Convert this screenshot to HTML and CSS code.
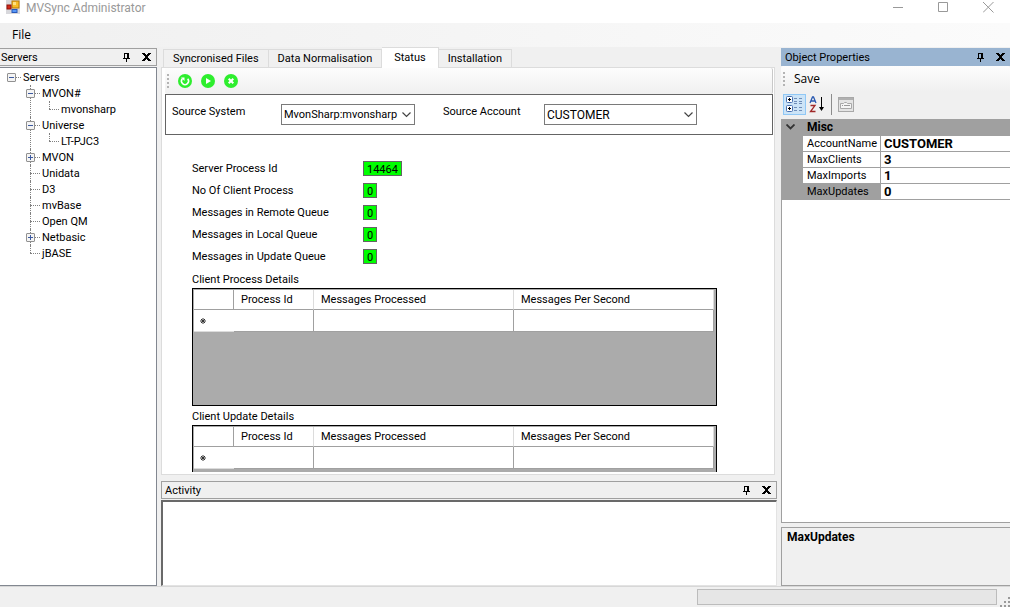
FILE: index.html
```html
<!DOCTYPE html>
<html lang="en">
<head>
    <meta charset="UTF-8">
    <meta name="viewport" content="width=device-width, initial-scale=1.0">
    <title>MVSync Administrator</title>
    <link rel="stylesheet" href="styles.css">
</head>
<body>
    <!-- shared icons -->
    <svg class="defs" width="0" height="0">
        <symbol id="pin" viewBox="0 0 7 9">
            <path d="M1 0h5v5h1v1H4v3H3V6H0V5h1zM2 1v4h2V1z" fill="#000" fill-rule="evenodd"/>
        </symbol>
        <symbol id="close" viewBox="0 0 9 8">
            <path d="M0 0h3v1h1v1h1V1h1V0h3v1H8v1H7v1H6v2h1v1h1v1h1v1H6V7H5V6H4v1H3v1H0V7h1V6h1V5h1V3H2V2H1V1H0z" fill="#000"/>
        </symbol>
        <symbol id="chevron" viewBox="0 0 9 6">
            <path d="M.5 .5l4 4 4-4" fill="none" stroke="#444" stroke-width="1.2"/>
        </symbol>
    </svg>

    <header class="titlebar">
        <svg class="app-icon" width="14" height="14" viewBox="0 0 14 14">
            <rect x="0" y="0" width="14" height="14" fill="#d8d8dc"/>
            <rect x="6" y="1" width="7" height="7" fill="#f8bc28" stroke="#b87808"/>
            <rect x="7" y="2" width="3" height="3" fill="#ffe080"/>
            <rect x="1" y="5" width="4" height="4" fill="#d02818" stroke="#901008"/>
            <rect x="6" y="9.500" width="5" height="3" fill="#5898f8" stroke="#2858b8"/>
        </svg>
        <h1>MVSync Administrator</h1>
        <button class="win-btn" aria-label="Minimize"><svg width="11" height="11"><path d="M0 5.500h10" stroke="#999"/></svg></button>
        <button class="win-btn" aria-label="Maximize"><svg width="11" height="11"><path d="M.5 .5h9v9h-9z" fill="none" stroke="#999"/></svg></button>
        <button class="win-btn" aria-label="Close"><svg width="11" height="11"><path d="M0 0l10.500 10.500M10.500 0L0 10.500" stroke="#999"/></svg></button>
    </header>

    <nav class="menubar"><button>File</button></nav>

    <main class="dock">
        <aside class="servers">
            <div class="pane-title">
                <h2>Servers</h2>
                <button aria-label="Pin"><svg width="7" height="9"><use href="#pin"/></svg></button>
                <button aria-label="Close"><svg width="9" height="8"><use href="#close"/></svg></button>
            </div>
            <ul class="tree">
                <li>
                    <div class="node"><button class="toggle open" aria-label="Collapse"></button>Servers</div>
                    <ul>
                        <li>
                            <div class="node"><button class="toggle open" aria-label="Collapse"></button>MVON#</div>
                            <ul><li><div class="node">mvonsharp</div></li></ul>
                        </li>
                        <li>
                            <div class="node"><button class="toggle open" aria-label="Collapse"></button>Universe</div>
                            <ul><li><div class="node">LT-PJC3</div></li></ul>
                        </li>
                        <li><div class="node"><button class="toggle" aria-label="Expand"></button>MVON</div></li>
                        <li><div class="node">Unidata</div></li>
                        <li><div class="node">D3</div></li>
                        <li><div class="node">mvBase</div></li>
                        <li><div class="node">Open QM</div></li>
                        <li><div class="node"><button class="toggle" aria-label="Expand"></button>Netbasic</div></li>
                        <li><div class="node">jBASE</div></li>
                    </ul>
                </li>
            </ul>
        </aside>

        <section class="center">
            <div class="tabs">
                <button>Syncronised Files</button>
                <button>Data Normalisation</button>
                <button class="active">Status</button>
                <button>Installation</button>
            </div>
            <div class="page">
                <div class="page-body">
                    <div class="toolbar">
                        <span class="grip"></span>
                        <button aria-label="Refresh"><svg width="14" height="14" viewBox="0 0 14 14"><circle cx="7" cy="7" r="7" fill="#2eee2e"/><path d="M4.300 4.800a3.500 3.500 0 1 0 5.400 0" fill="none" stroke="#fff" stroke-width="1.500"/><path d="M3 3.500h3.500V7z" fill="#fff"/></svg></button>
                        <button aria-label="Start"><svg width="14" height="14" viewBox="0 0 14 14"><circle cx="7" cy="7" r="7" fill="#2eee2e"/><path d="M5 4l5 3-5 3z" fill="#fff"/></svg></button>
                        <button aria-label="Stop"><svg width="14" height="14" viewBox="0 0 14 14"><circle cx="7" cy="7" r="7" fill="#2eee2e"/><path d="M4.700 4.700l4.600 4.600M9.300 4.700L4.700 9.300" stroke="#fff" stroke-width="2"/></svg></button>
                    </div>
                    <div class="source">
                        <label for="system">Source System</label>
                        <div class="combo system">
                            <select id="system"><option>MvonSharp:mvonsharp</option></select>
                            <svg width="9" height="6"><use href="#chevron"/></svg>
                        </div>
                        <label for="account">Source Account</label>
                        <div class="combo account">
                            <select id="account"><option>CUSTOMER</option></select>
                            <svg width="9" height="6"><use href="#chevron"/></svg>
                        </div>
                    </div>
                    <div class="content">
                        <dl class="stats">
                            <dt>Server Process Id</dt><dd><span>14464</span></dd>
                            <dt>No Of Client Process</dt><dd><span>0</span></dd>
                            <dt>Messages in Remote Queue</dt><dd><span>0</span></dd>
                            <dt>Messages in Local Queue</dt><dd><span>0</span></dd>
                            <dt>Messages in Update Queue</dt><dd><span>0</span></dd>
                        </dl>
                        <h3>Client Process Details</h3>
                        <div class="grid-view">
                            <table>
                                <tr><th class="row-head"></th><th class="id">Process Id</th><th class="processed">Messages Processed</th><th>Messages Per Second</th></tr>
                                <tr><td class="row-head"><svg width="6" height="6" viewBox="0 0 6 6"><path d="M3 0v6M0 3h6M1 1l4 4M5 1L1 5" stroke="#333"/></svg></td><td></td><td></td><td></td></tr>
                            </table>
                        </div>
                        <h3>Client Update Details</h3>
                        <div class="grid-view">
                            <table>
                                <tr><th class="row-head"></th><th class="id">Process Id</th><th class="processed">Messages Processed</th><th>Messages Per Second</th></tr>
                                <tr><td class="row-head"><svg width="6" height="6" viewBox="0 0 6 6"><path d="M3 0v6M0 3h6M1 1l4 4M5 1L1 5" stroke="#333"/></svg></td><td></td><td></td><td></td></tr>
                            </table>
                        </div>
                    </div>
                </div>
            </div>
            <div class="pane-title">
                <h2><label for="activity">Activity</label></h2>
                <button aria-label="Pin"><svg width="7" height="9"><use href="#pin"/></svg></button>
                <button aria-label="Close"><svg width="9" height="8"><use href="#close"/></svg></button>
            </div>
            <textarea id="activity" class="activity"></textarea>
        </section>

        <aside class="properties">
            <div class="pane-title focused">
                <h2>Object Properties</h2>
                <button aria-label="Pin"><svg width="7" height="9"><use href="#pin"/></svg></button>
                <button aria-label="Close"><svg width="9" height="8"><use href="#close"/></svg></button>
            </div>
            <div class="toolbar save">
                <span class="grip"></span>
                <button>Save</button>
            </div>
            <div class="sortbar">
                <button class="on" aria-label="Categorized">
                    <svg width="17" height="17" viewBox="0 0 17 17">
                        <g fill="#fff" stroke="#4870b0"><rect x=".5" y=".5" width="6" height="6" rx="1"/><rect x=".5" y="9.500" width="6" height="6" rx="1"/></g>
                        <path d="M2 3.500h3M3.500 2v3M2 12.500h3M3.500 11v3" stroke="#000"/>
                        <path d="M8 2.500h4M8 5.500h4M8 7.500h4M8 11.500h4M8 14.500h4M13 2.500h3M13 5.500h3M13 7.500h3M13 11.500h3M13 14.500h3" stroke="#6f8db8" stroke-dasharray="3 1"/>
                    </svg>
                </button>
                <button aria-label="Alphabetical">
                    <svg width="16" height="17" viewBox="0 0 16 17">
                        <path d="M1 7l2.500-6h1L7 7M2 5h4" fill="none" stroke="#2858b0" stroke-width="1.300"/>
                        <path d="M1.500 9.500H6L1.500 15.500h5" fill="none" stroke="#a02828" stroke-width="1.300"/>
                        <path d="M12.500 1v13" stroke="#000"/><path d="M10 11h5l-2.500 4z"/>
                    </svg>
                </button>
                <span class="sep"></span>
                <button aria-label="Property Pages" disabled>
                    <svg width="16" height="15" viewBox="0 0 16 15">
                        <rect x=".5" y=".5" width="15" height="14" fill="#e4e4e4" stroke="#a8a8a8"/>
                        <path d="M1 2h14" stroke="#b0b0b0" stroke-width="2"/>
                        <path d="M2.500 11.500v-5h3l1-1h2l1 1h4v5z" fill="#f4f4f4" stroke="#a8a8a8"/>
                        <path d="M4 8.500h1M6 8.500h6" stroke="#999"/>
                    </svg>
                </button>
            </div>
            <div class="prop-grid">
                <table>
                    <colgroup><col class="col-gutter"><col class="col-name"><col></colgroup>
                    <tr class="category"><th class="gutter"><svg width="9" height="6" viewBox="0 0 9 6"><path d="M.5 .5l4 4 4-4" fill="none" stroke="#333" stroke-width="1.800"/></svg></th><th colspan="2">Misc</th></tr>
                    <tr><td class="gutter"></td><th>AccountName</th><td>CUSTOMER</td></tr>
                    <tr><td class="gutter"></td><th>MaxClients</th><td>3</td></tr>
                    <tr><td class="gutter"></td><th>MaxImports</th><td>1</td></tr>
                    <tr class="selected"><td class="gutter"></td><th>MaxUpdates</th><td>0</td></tr>
                </table>
            </div>
            <div class="prop-help">MaxUpdates</div>
        </aside>
    </main>

    <footer class="statusbar">
        <progress value="0" max="100" aria-label="Progress"></progress>
        <svg width="10" height="10" viewBox="0 0 10 10"><path d="M8 0h2v2H8zM4 4h2v2H4zM8 4h2v2H8zM0 8h2v2H0zM4 8h2v2H4zM8 8h2v2H8z" fill="#999"/></svg>
    </footer>
</body>
</html>
```
FILE: styles.css
```css
* {
    box-sizing: border-box;
}

body {
    margin: 0;
    height: 100vh;
    display: flex;
    flex-direction: column;
    overflow: hidden;
    background: #f0f0f0;
    color: #000;
    font: 11px/14px Roboto, "Liberation Sans", sans-serif;
}

h1, h2, h3, ul, dl, dd {
    margin: 0;
    padding: 0;
    font-size: inherit;
    font-weight: normal;
}

ul {
    list-style: none;
}

button {
    padding: 0;
    border: 0;
    background: none;
    color: inherit;
    font: inherit;
}

svg {
    display: block;
}

table {
    border-collapse: separate;
    border-spacing: 0;
    table-layout: fixed;
}

th, td {
    padding: 0;
    text-align: left;
    font-weight: normal;
}

.defs {
    position: absolute;
}

/* title and menu */
.titlebar {
    flex: none;
    display: flex;
    height: 23px;
    padding-left: 6px;
    background: #fff;
    color: #999;
    font-size: 12px;
    line-height: 16px;
}

.titlebar h1 {
    flex: 1;
    padding-left: 6px;
}

.win-btn {
    width: 45px;
    display: flex;
    justify-content: center;
    padding: 2px 0 0 2px;
}

.menubar {
    flex: none;
    height: 24px;
    padding-left: 12px;
    background: linear-gradient(to right, #f0f0f0, #fbfbfb);
    font: 12px/24px "Open Sans", "Noto Sans", sans-serif;
}

/* docked panes */
.dock {
    flex: 1;
    min-height: 0;
    display: grid;
    grid-template-columns: 157px minmax(0, 1fr) 229px;
    grid-template-rows: minmax(0, 1fr);
    column-gap: 4px;
}

.servers, .center, .properties {
    display: flex;
    flex-direction: column;
    min-height: 0;
}

.servers, .properties {
    padding-top: 1px;
}

.pane-title {
    flex: none;
    display: flex;
    align-items: center;
    gap: 12px;
    height: 18px;
    padding: 0 5px 0 3px;
    border: 1px solid #a0a0a0;
}

.pane-title h2 {
    flex: 1;
    padding-top: 2px;
}

.servers .pane-title {
    padding-left: 1px;
    border-left: 0;
}

.pane-title.focused {
    padding-right: 4px;
    background: #99b4d1;
    border-color: #99b4d1;
}

/* server tree */
.tree {
    flex: 1;
    margin-top: 1px;
    padding: 1px 0 0 4px;
    background: #fff;
    border: 1px solid #828790;
    border-left: 0;
}

.tree li {
    position: relative;
}

.tree ul {
    padding-left: 19px;
}

.tree ul > li::before {
    content: "";
    position: absolute;
    left: 7px;
    top: 0;
    height: 100%;
    border-left: 1px dotted #808080;
}

.tree ul > li:last-child::before {
    height: 8px;
}

.node {
    position: relative;
    height: 16px;
    padding-left: 19px;
    line-height: 18px;
}

.node::before {
    content: "";
    position: absolute;
    left: 7px;
    top: 8px;
    width: 10px;
    border-top: 1px dotted #808080;
}

.toggle {
    position: absolute;
    left: 3px;
    top: 4px;
    width: 9px;
    height: 9px;
    border: 1px solid #919191;
    border-radius: 1px;
    background:
        linear-gradient(#3c5aa0, #3c5aa0) center / 5px 1px no-repeat,
        linear-gradient(#3c5aa0, #3c5aa0) center / 1px 5px no-repeat,
        #f4f4f4;
}

.toggle.open {
    background: linear-gradient(#3c5aa0, #3c5aa0) center / 5px 1px no-repeat, #f4f4f4;
}

/* tabs */
.tabs {
    flex: none;
    display: flex;
    align-items: flex-end;
    height: 20px;
    padding-left: 2px;
}

.tabs button {
    height: 18px;
    padding: 0 9px;
    border: 1px solid #dcdcdc;
    border-width: 1px 1px 0 0;
    line-height: 18px;
}

.tabs button:first-child {
    border-left-width: 1px;
}

.tabs .active {
    height: 21px;
    margin-bottom: -1px;
    padding: 0 12px;
    background: #fff;
    z-index: 1;
}

.page {
    flex: 1;
    min-height: 0;
    display: flex;
    margin: 0 2px 6px 0;
    padding: 0 1px 2px 3px;
    background: #fff;
    border: 1px solid #dcdcdc;
}

.page-body {
    flex: 1;
    overflow: hidden;
}

.toolbar {
    display: flex;
    align-items: center;
    gap: 9px;
    height: 26px;
    padding-left: 2px;
    background: linear-gradient(#fdfdfd, #f0f0f0);
    border-right: 1px solid #c8c8c8;
    border-radius: 2px;
}

.grip {
    width: 2px;
    height: 14px;
    background: repeating-linear-gradient(#b4b4b4 0 2px, transparent 2px 4px);
}

.source {
    display: flex;
    height: 41px;
    padding: 9px 6px;
    border: 1px solid #646464;
}

.source label {
    width: 109px;
    line-height: 16px;
}

.source .system + label {
    width: 101px;
    margin-left: 28px;
}

.combo {
    position: relative;
    height: 21px;
}

.combo.system {
    width: 134px;
}

.combo.account {
    width: 153px;
    font-size: 12px;
}

.combo select {
    appearance: none;
    width: 100%;
    height: 100%;
    padding: 0 2px;
    border: 1px solid #7a7a7a;
    border-radius: 0;
    background: #fff;
    color: inherit;
    font: inherit;
}

.combo svg {
    position: absolute;
    right: 4px;
    top: 8px;
    pointer-events: none;
}

.content {
    padding: 23px 27px 0;
}

.stats {
    display: grid;
    grid-template-columns: 171px auto;
    grid-auto-rows: 22px;
    align-items: center;
    margin-bottom: 4px;
}

.stats dd {
    display: flex;
    height: 16px;
}

.stats span {
    height: 15px;
    padding: 0 3px;
    border: 1px solid #646464;
    background: #00ff00;
    line-height: 15px;
}

.content h3 {
    height: 14px;
    line-height: 16px;
}

.grid-view {
    width: 525px;
    height: 118px;
    margin: 2px 0 3px;
    padding: 1px;
    background: #ababab;
    border: 1px solid #000;
}

.grid-view table {
    width: 520px;
    background: #fff;
}

.grid-view th {
    height: 20px;
    padding: 1px 0 0 7px;
    border-right: 1px solid #dcdcdc;
    border-bottom: 1px solid #a0a0a0;
}

.grid-view td {
    height: 22px;
    border-right: 1px solid #a0a0a0;
    border-bottom: 1px solid #a0a0a0;
}

.grid-view .row-head {
    width: 40px;
    padding-left: 6px;
}

.grid-view th.row-head {
    border-right-color: #a0a0a0;
}

.grid-view td.row-head {
    border-right: 0;
    border-bottom-color: #dcdcdc;
}

.grid-view .id {
    width: 80px;
}

.grid-view .processed {
    width: 200px;
}

.activity {
    flex: none;
    height: 86px;
    margin-top: 1px;
    border: 1px solid #e3e3e3;
    border-top: 2px solid #696969;
    border-left: 2px solid #696969;
    background: #fff;
    resize: none;
}

/* object properties */
.toolbar.save {
    border-right: 0;
    font: 12px/16px "Open Sans", "Noto Sans", sans-serif;
}

.sortbar {
    display: flex;
    align-items: center;
    height: 27px;
    padding: 1px 2px 3px;
}

.sortbar button {
    display: grid;
    place-items: center;
    width: 22px;
    height: 21px;
}

.sortbar .on {
    width: 23px;
    background: #cce4f7;
    border: 1px solid #90c8f6;
}

.sep {
    height: 21px;
    margin: 0 3px;
    border-left: 1px solid #8c8c8c;
}

.prop-grid {
    flex: 1;
    background: #fff;
    border: 1px solid #a0a0a0;
    border-top: 0;
    border-right: 0;
}

.prop-grid table {
    width: 100%;
}

.col-gutter {
    width: 21px;
}

.col-name {
    width: 78px;
}

.prop-grid th, .prop-grid td {
    height: 16px;
    border-bottom: 1px solid #a0a0a0;
    line-height: 15px;
}

.prop-grid th {
    padding-left: 4px;
    border-right: 1px solid #a0a0a0;
}

.prop-grid td {
    padding-left: 3px;
    font-size: 13px;
    font-weight: bold;
}

.prop-grid .gutter {
    background: #a0a0a0;
}

.prop-grid .category th {
    height: 17px;
    background: #a0a0a0;
    font-size: 12px;
    font-weight: bold;
}

.selected th {
    background: #a0a0a0;
}

.prop-help {
    flex: none;
    height: 59px;
    margin-top: 4px;
    padding: 2px 5px;
    border: 1px solid #a0a0a0;
    border-right: 0;
    font-size: 12px;
    font-weight: bold;
}

.statusbar {
    flex: none;
    display: flex;
    justify-content: flex-end;
    align-items: flex-end;
    gap: 3px;
    height: 21px;
    border-top: 1px solid #d7d7d7;
}

.statusbar progress {
    appearance: none;
    width: 300px;
    height: 16px;
    margin-bottom: 2px;
    border: 1px solid #bcbcbc;
    background: #e6e6e6;
}

.statusbar progress::-webkit-progress-bar {
    background: #e6e6e6;
}
```
